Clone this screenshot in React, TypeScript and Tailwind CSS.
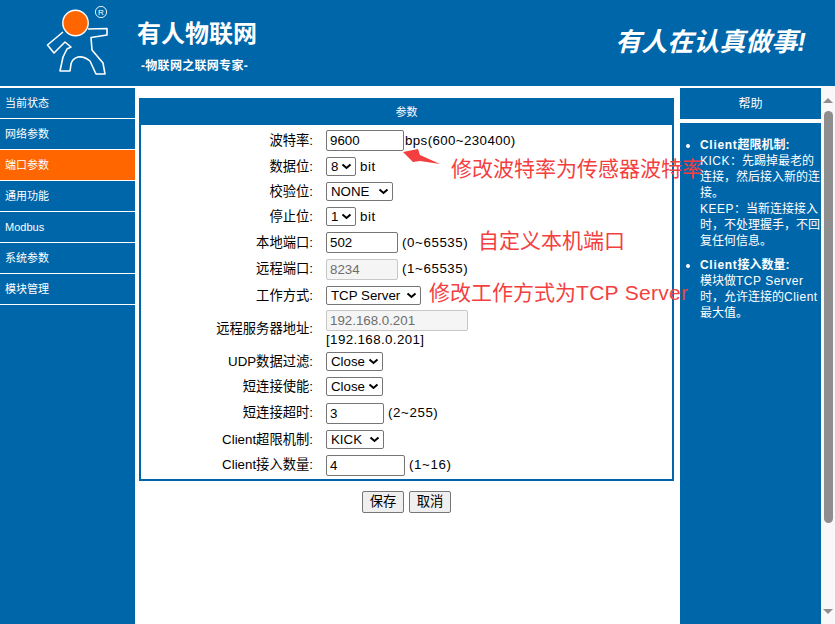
const font = "font-['Liberation_Sans','Noto_Sans_CJK_SC',sans-serif]";

const navItems = ["当前状态", "网络参数", "端口参数", "通用功能", "Modbus", "系统参数", "模块管理"];

function Logo() {
	return (
		<svg width="66" height="76" viewBox="46 6 66 76" className="shrink-0">
			<path
				d="M88 29 L107 28.5 L107 35 L91 37.5 L92 50 L103 63 L105 74 L96 74 L90 61 Q84 56 78 57 Q72 59 71 64 L70 71 L60 71 L63 57 L67 49 L71 47 L65 42 L54 53 L47.5 45 L63 32"
				fill="none"
				stroke="#fff"
				strokeWidth="1.6"
				strokeLinejoin="round"
			/>
			<circle cx="75.5" cy="23" r="12.7" fill="#ff6600" stroke="#fff" strokeWidth="1.4" />
			<circle cx="101" cy="12" r="5.6" fill="none" stroke="#fff" strokeWidth="0.9" />
			<text x="101" y="15" fontSize="8" fill="#fff" textAnchor="middle">R</text>
		</svg>
	);
}

function Field({ label, children, h = "h-[26px]" }: { label: string; children: React.ReactNode; h?: string }) {
	return (
		<div className={`flex items-center ${h}`}>
			<div className="w-[185px] text-right pr-[13px] text-[13.3px] text-black">{label}:</div>
			<div className="flex items-center">{children}</div>
		</div>
	);
}

function Input({ value, width, disabled }: { value: string; width: string; disabled?: boolean }) {
	return (
		<input
			readOnly
			value={value}
			className={`${width} h-[21px] rounded-[2px] border px-[3px] text-[13.3px] ${
				disabled ? "border-[#c8c8c8] bg-[#f5f5f5] text-[#6d6d6d]" : "border-[#767676] bg-white text-black"
			}`}
		/>
	);
}

function Select({ value, width }: { value: string; width: string }) {
	return (
		<div className={`${width} h-[19px] rounded-[2px] border border-[#767676] bg-white flex items-center justify-between pl-[4px] pr-[3px] text-[13.3px] text-black`}>
			<span>{value}</span>
			<svg width="11" height="7" viewBox="0 0 11 7">
				<path d="M1.5 1.5 L5.5 5 L9.5 1.5" fill="none" stroke="#000" strokeWidth="2" />
			</svg>
		</div>
	);
}

function Hint({ children, className = "ml-[4px]" }: { children: React.ReactNode; className?: string }) {
	return <span className={`${className} text-[13.3px] tracking-[0.6px] text-black`}>{children}</span>;
}

function Annotation({ children, className }: { children: React.ReactNode; className: string }) {
	return <div className={`absolute whitespace-nowrap text-[21px] leading-none text-[#f33f3f] ${className}`}>{children}</div>;
}

export default function App() {
	return (
		<div className={`${font} h-[624px] w-[835px] overflow-hidden flex flex-col bg-white`}>
			{/* Header */}
			<div className="h-[86px] shrink-0 bg-[#0066aa] flex items-start text-white">
				<div className="ml-[46px] mt-[6px]">
					<Logo />
				</div>
				<div className="ml-[25px] mt-[19px] w-[122px]">
					<div className="text-[24px] leading-[30px] font-bold whitespace-nowrap">有人物联网</div>
					<div className="mt-[9px] ml-[4px] text-[12px] leading-[16px] tracking-[0.3px] font-bold whitespace-nowrap">-物联网之联网专家-</div>
				</div>
				<div className="ml-auto mr-[29px] mt-[26px] text-[26px] leading-[32px] font-bold italic whitespace-nowrap">有人在认真做事!</div>
			</div>

			<div className="flex flex-1 min-h-0">
				{/* Sidebar */}
				<div className="w-[135px] shrink-0 bg-[#0066aa] border-t-2 border-white">
					{navItems.map((item) => (
						<div
							key={item}
							className={`h-[31px] border-b border-white pl-[5px] pt-[1px] flex items-center text-[11px] text-white ${
								item === "端口参数" ? "bg-[#ff6600]" : ""
							}`}
						>
							{item}
						</div>
					))}
				</div>

				{/* Main */}
				<div className="relative w-[545px] shrink-0 pl-[4px] pr-[6px] pt-[12px]">
					<div className="border-2 border-[#0066aa] border-t-0">
						<div className="-mx-[2px] h-[27px] pt-[2px] bg-[#0066aa] flex items-center justify-center text-[11px] text-white">参数</div>
						<div className="pt-[2px] pb-[1px]">
							<Field label="波特率" h="h-[27px]">
								<Input value="9600" width="w-[78px]" />
								<span className="ml-[1px] text-[13.3px] tracking-[0.4px] text-black">bps(600~230400)</span>
							</Field>
							<Field label="数据位" h="h-[25px]">
								<Select value="8" width="w-[30px]" />
								<Hint>bit</Hint>
							</Field>
							<Field label="校验位" h="h-[25px]">
								<Select value="NONE" width="w-[67px]" />
							</Field>
							<Field label="停止位" h="h-[25px]">
								<Select value="1" width="w-[30px]" />
								<Hint>bit</Hint>
							</Field>
							<Field label="本地端口" h="h-[27px]">
								<Input value="502" width="w-[72px]" />
								<Hint>(0~65535)</Hint>
							</Field>
							<Field label="远程端口" h="h-[26px]">
								<Input value="8234" width="w-[72px]" disabled />
								<Hint>(1~65535)</Hint>
							</Field>
							<Field label="工作方式" h="h-[27px]">
								<Select value="TCP Server" width="w-[95px]" />
							</Field>
							<div className="flex items-center h-[40px]">
								<div className="w-[185px] text-right pr-[13px] text-[13.3px] text-black">远程服务器地址:</div>
								<div className="flex flex-col">
									<Input value="192.168.0.201" width="w-[142px]" disabled />
									<span className="text-[13.3px] leading-[17px] tracking-[0.4px] text-black">[192.168.0.201]</span>
								</div>
							</div>
							<Field label="UDP数据过滤" h="h-[25px]">
								<Select value="Close" width="w-[57px]" />
							</Field>
							<Field label="短连接使能" h="h-[25px]">
								<Select value="Close" width="w-[57px]" />
							</Field>
							<Field label="短连接超时" h="h-[28px]">
								<Input value="3" width="w-[58px]" />
								<Hint>(2~255)</Hint>
							</Field>
							<Field label="Client超限机制" h="h-[25px]">
								<Select value="KICK" width="w-[58px]" />
							</Field>
							<Field label="Client接入数量" h="h-[26px]">
								<Input value="4" width="w-[79px]" />
								<Hint>(1~16)</Hint>
							</Field>
						</div>
					</div>
					<div className="mt-[10px] flex justify-center gap-[5px]">
						<button className="h-[22px] w-[42px] rounded-[2px] border border-[#767676] bg-[#efefef] text-[13.3px] text-black">保存</button>
						<button className="h-[22px] w-[42px] rounded-[2px] border border-[#767676] bg-[#efefef] text-[13.3px] text-black">取消</button>
					</div>

					{/* Red notes drawn over the screenshot */}
					<svg width="40" height="22" viewBox="0 0 40 22" className="absolute left-[267px] top-[59px]">
						<path d="M1 7 L16 4 L18 10 L38 19 L18 16 L11 17 Z" fill="#f33f3f" />
					</svg>
					<Annotation className="left-[316px] top-[72px]">修改波特率为传感器波特率</Annotation>
					<Annotation className="left-[343px] top-[144px]">自定义本机端口</Annotation>
					<Annotation className="left-[294px] top-[196px]">
						修改工作方式为<span className="tracking-[0.3px]">TCP Server</span>
					</Annotation>
				</div>

				{/* Help */}
				<div className="w-[141px] shrink-0 flex flex-col text-white">
					<div className="mt-[2px] h-[31px] bg-[#0066aa] flex items-center justify-center text-[12px]">帮助</div>
					<div className="mt-[4px] flex-1 bg-[#0066aa] pt-[14px] pl-[20px] pr-[1px] text-[12px] leading-[16px]">
						<ul className="list-disc">
							<li className="mb-[8px]">
								<b><span className="tracking-[0.7px]">Client</span>超限机制:</b>
								<br />
								<span className="tracking-[0.5px]">KICK</span>：先踢掉最老的连接，然后接入新的连接。
								<br />
								<span className="tracking-[0.5px]">KEEP</span>：当新连接接入时，不处理握手，不回复任何信息。
							</li>
							<li>
								<b><span className="tracking-[0.7px]">Client</span>接入数量:</b>
								<br />
								模块做<span className="tracking-[0.5px]">TCP Server</span>时，允许连接的<span className="tracking-[0.5px]">Client</span>最大值。
							</li>
						</ul>
					</div>
				</div>

				{/* Scrollbar */}
				<div className="w-[14px] shrink-0 bg-[#f8f8f8] flex flex-col items-center pt-[12px] pb-[10px]">
					<svg width="10" height="5" viewBox="0 0 10 5" className="shrink-0">
						<path d="M0 5 L5 0 L10 5 Z" fill="#8e8e8e" />
					</svg>
					<div className="mt-[8px] w-[9px] h-[412px] rounded-[5px] bg-[#8e8e8e]" />
					<svg width="10" height="5" viewBox="0 0 10 5" className="mt-auto shrink-0">
						<path d="M0 0 L10 0 L5 5 Z" fill="#8e8e8e" />
					</svg>
				</div>
			</div>
		</div>
	);
}
